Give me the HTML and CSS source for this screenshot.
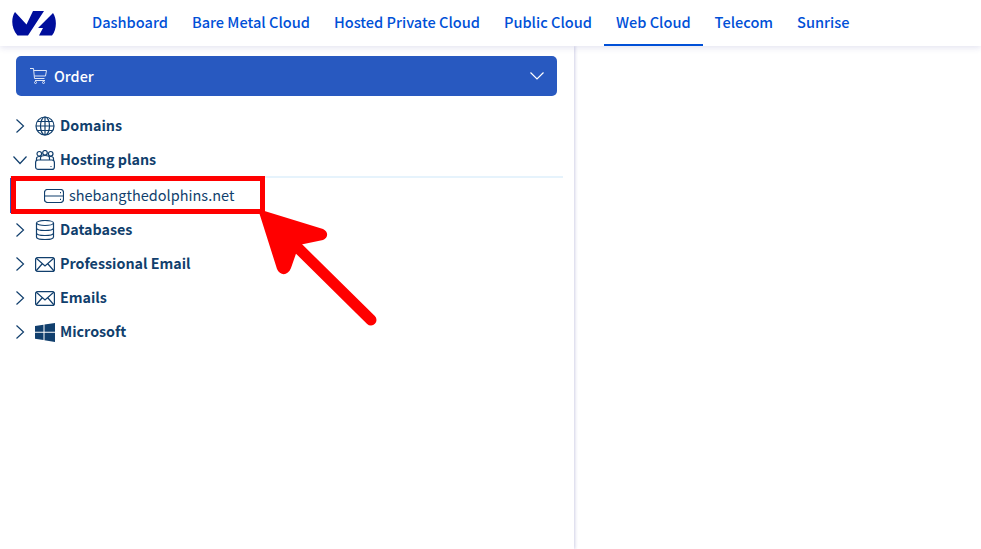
FILE: index.html
```
<!DOCTYPE html>
<html lang="en">
<head>
<meta charset="utf-8">
<title>Web Cloud</title>
<link rel="stylesheet" href="styles.css">
</head>
<body>
<header class="topbar">
  <svg class="logo" width="44" height="26" viewBox="0 0 44 26"><path class="logo-fill" d="M3 2L14.500 14.500L21 1H32L16 25.500H5.500C-1 18-1 8 3 2Z"/><path class="logo-fill" d="M41 3C45 9 45 19 40 25.500H27L31 18H26L41 3Z"/></svg>
  <nav class="nav">
    <a class="nav-item">Dashboard</a>
    <a class="nav-item">Bare Metal Cloud</a>
    <a class="nav-item">Hosted Private Cloud</a>
    <a class="nav-item">Public Cloud</a>
    <a class="nav-item active">Web Cloud</a>
    <a class="nav-item">Telecom</a>
    <a class="nav-item">Sunrise</a>
  </nav>
</header>
<main class="main">
  <aside class="sidebar">
    <button class="order">
      <svg class="cart" width="17" height="16" viewBox="0 0 17 16"><path d="M0 .5H3.500L4.500 10.500H14.500M3.800 2.500H16.500L15.500 8H4.300M5 12.500H15"/><circle cx="5.500" cy="14.500" r="1"/><circle cx="13.500" cy="14.500" r="1"/></svg>
      <span class="order-label">Order</span>
      <svg class="order-chev" width="14" height="8" viewBox="0 0 14 8"><path d="M.5.500L7 7L13.500.500"/></svg>
    </button>
    <ul class="tree">
      <li class="row">
        <svg class="chev" width="10" height="14" viewBox="0 0 10 14"><path d="M1.500.500L8.500 7L1.500 13.500"/></svg>
        <svg class="icon" width="20" height="20" viewBox="0 0 20 20"><circle cx="10" cy="10" r="9"/><ellipse cx="10" cy="10" rx="4.500" ry="9"/><path d="M10 1V19M1 10H19M2.200 5.500H17.800M2.200 14.500H17.800"/></svg>
        <span>Domains</span>
      </li>
      <li class="row row-open">
        <svg class="chev-down" width="14" height="10" viewBox="0 0 14 10"><path d="M.5 1.500L7 8.500L13.500 1.500"/></svg>
        <svg class="icon" width="20" height="20" viewBox="0 0 20 20"><circle cx="10" cy="2.800" r="2.300"/><circle cx="4.300" cy="3.800" r="2.300"/><circle cx="15.700" cy="3.800" r="2.300"/><path d="M1.500 11V8.500C1.500 7 3 6.500 4.500 6.500S6.500 7 6.500 7M18.500 11V8.500C18.500 7 17 6.500 15.500 6.500S13.500 7 13.500 7M5.500 10V8C5.500 6 8 5.500 10 5.500S14.500 6 14.500 8V10"/><rect x=".6" y="10" width="18.800" height="9.400" rx="2.500"/><path d="M15.500 16.500H16.500"/></svg>
        <span>Hosting plans</span>
      </li>
      <li class="row row-child">
        <svg class="icon" width="20" height="14" viewBox="0 0 20 14"><rect x=".5" y=".5" width="19" height="13" rx="3"/><path d="M.5 7H19.500M16 3.700H17M16 10.300H17"/></svg>
        <span>shebangthedolphins.net</span>
      </li>
      <li class="row">
        <svg class="chev" width="10" height="14" viewBox="0 0 10 14"><path d="M1.500.500L8.500 7L1.500 13.500"/></svg>
        <svg class="icon" width="20" height="20" viewBox="0 0 20 20"><ellipse cx="10" cy="3" rx="8.500" ry="2.500"/><path d="M1.500 3V17C1.500 18.500 5 19.500 10 19.500S18.500 18.500 18.500 17V3M1.500 8C1.500 9.500 5 10.500 10 10.500S18.500 9.500 18.500 8M1.500 13C1.500 14.500 5 15.500 10 15.500S18.500 14.500 18.500 13"/></svg>
        <span>Databases</span>
      </li>
      <li class="row">
        <svg class="chev" width="10" height="14" viewBox="0 0 10 14"><path d="M1.500.500L8.500 7L1.500 13.500"/></svg>
        <svg class="icon" width="20" height="15" viewBox="0 0 20 15"><rect x=".6" y=".6" width="18.800" height="13.800" rx="2"/><path d="M1 1L10 9L19 1M1 14L7 7M19 14L13 7"/></svg>
        <span>Professional Email</span>
      </li>
      <li class="row">
        <svg class="chev" width="10" height="14" viewBox="0 0 10 14"><path d="M1.500.500L8.500 7L1.500 13.500"/></svg>
        <svg class="icon" width="20" height="15" viewBox="0 0 20 15"><rect x=".6" y=".6" width="18.800" height="13.800" rx="2"/><path d="M1 1L10 9L19 1M1 14L7 7M19 14L13 7"/></svg>
        <span>Emails</span>
      </li>
      <li class="row">
        <svg class="chev" width="10" height="14" viewBox="0 0 10 14"><path d="M1.500.500L8.500 7L1.500 13.500"/></svg>
        <svg class="icon-solid" width="20" height="19" viewBox="0 0 20 19"><path d="M0 3L8.500 1.700V8.800H0ZM9.500 1.500L20 0V8.800H9.500ZM0 9.800H8.500V17L0 15.800ZM9.500 9.800H20V19L9.500 17.300Z"/></svg>
        <span>Microsoft</span>
      </li>
    </ul>
  </aside>
  <section class="content"></section>
</main>
<div class="mark-box"></div>
<svg class="mark-arrow" width="140" height="130" viewBox="250 200 140 130"><path class="arrow-head" d="M258 209L323 229C329 232 328 238 323 240L299 245L291 268C288 276 280 276 277 269Z"/><path class="arrow-tail" d="M295 245L371 320"/></svg>
</body>
</html>
```
FILE: styles.css
```
* { box-sizing: border-box; }
html, body { height: 100%; }
body {
  margin: 0;
  overflow: hidden;
  background: #fff;
  color: #113f6d;
  font-family: "Noto Sans CJK JP", "Noto Sans", sans-serif;
  font-size: 14.5px;
  display: flex;
  flex-direction: column;
}
.topbar {
  position: relative;
  z-index: 2;
  flex: none;
  height: 46px;
  display: flex;
  align-items: stretch;
  padding-left: 12px;
  background: #fff;
  box-shadow: 0 2px 6px rgba(40, 40, 140, .12);
}
.logo { align-self: flex-start; margin-top: 10px; }
.logo-fill { fill: #000e9c; }
.nav { display: flex; margin-left: 24px; }
.nav-item {
  display: flex;
  align-items: center;
  padding: 0 12px;
  color: #0050d7;
  font-size: 14.58px;
  font-weight: 500;
  line-height: 1;
  border-bottom: 2px solid transparent;
}
.nav-item.active { border-bottom-color: #0050d7; }
.main { flex: 1; display: flex; min-height: 0; }
.sidebar {
  flex: none;
  width: 574px;
  padding: 10px 11px 0 10px;
  box-shadow: 1px 0 3px rgba(40, 40, 140, .22);
}
.order {
  display: flex;
  align-items: center;
  width: 541px;
  height: 40px;
  margin-left: 6px;
  padding: 0 13px 0 14px;
  border: 0;
  border-radius: 5px;
  background: #2859c0;
  color: #fff;
  font: inherit;
  font-size: 14.4px;
  font-weight: 500;
}
.cart { fill: none; stroke: #dfe6f6; stroke-width: 1; margin-right: 7px; }
.order-label { flex: 1; text-align: left; margin-bottom: 2px; }
.order-chev { fill: none; stroke: #fff; stroke-width: 1.200; }
.tree { list-style: none; margin: 13px 0 0; padding: 0; }
.row {
  display: flex;
  align-items: center;
  height: 34px;
  padding-left: 5px;
  font-size: 14.3px;
  font-weight: 700;
  line-height: 1;
}
.row span { margin-left: 5px; margin-bottom: 1px; }
.chev, .chev-down { flex: none; fill: none; stroke: #113f6d; stroke-width: 1.200; }
.chev { margin-right: 10px; }
.chev-down { margin-left: -2px; margin-right: 8px; }
.icon { flex: none; fill: none; stroke: #113f6d; stroke-width: 1.200; }
.icon-solid { flex: none; fill: #113f6d; }
.row-open { border-bottom: 2px solid #e6f3fc; height: 35px; }
.row-child {
  height: 35px;
  padding-left: 32px;
  font-size: 14.5px;
  font-weight: 400;
  border-left: 2px solid #2859c0;
}
.mark-box {
  position: absolute;
  left: 11px;
  top: 176px;
  width: 254px;
  height: 38px;
  border: 5px solid #f00;
}
.mark-arrow { position: absolute; left: 250px; top: 200px; }
.arrow-head { fill: #f00; }
.arrow-tail { fill: none; stroke: #f00; stroke-width: 11; stroke-linecap: round; }
```
